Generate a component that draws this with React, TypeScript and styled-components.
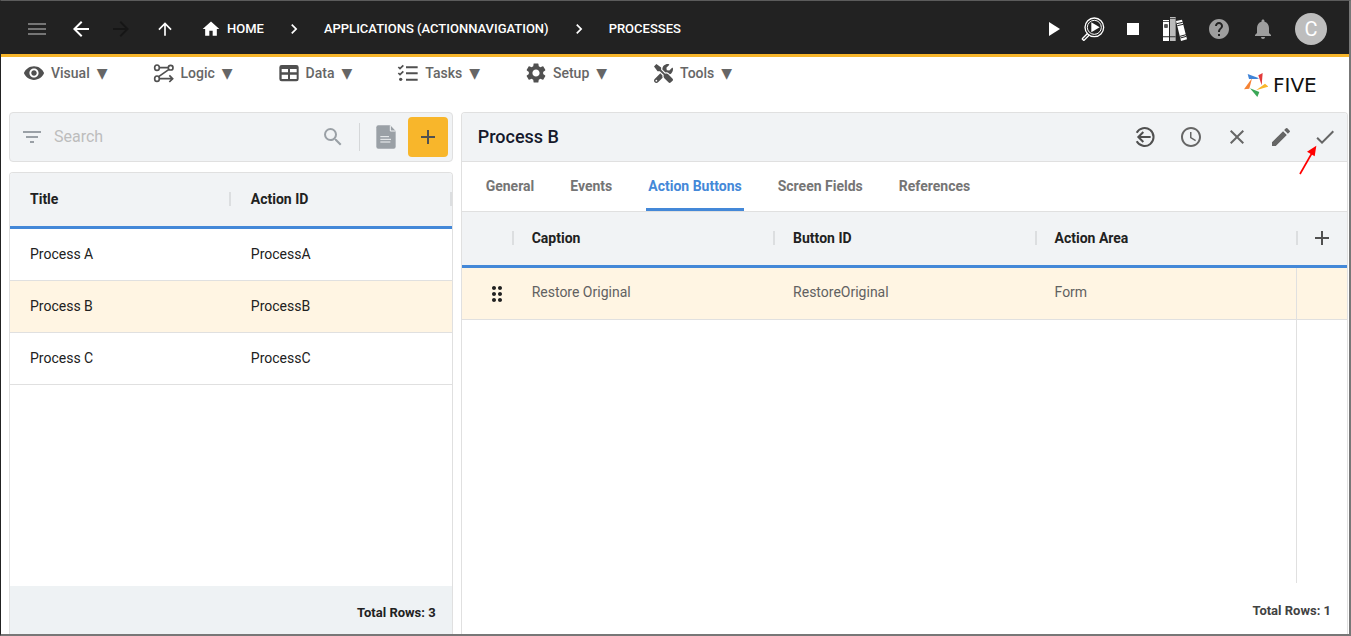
import React from "react";
import styled, { createGlobalStyle, css } from "styled-components";
import {
  MdAdd,
  MdArrowBack,
  MdArrowForward,
  MdArrowUpward,
  MdCheck,
  MdChevronRight,
  MdClose,
  MdDragIndicator,
  MdEdit,
  MdFilterList,
  MdHelp,
  MdHome,
  MdMenu,
  MdNotifications,
  MdPlayArrow,
  MdSchedule,
  MdSearch,
  MdSettings,
  MdStop,
  MdVisibility,
} from "react-icons/md";
import { FaTools } from "react-icons/fa";

const GlobalStyle = createGlobalStyle`
  *, *::before, *::after { box-sizing: border-box; }
  body {
    margin: 0;
    background: #fff;
    color: #212121;
    font-family: Roboto, "Liberation Sans", sans-serif;
    font-size: 14px;
    line-height: 20px;
  }
  button, input { font: inherit; }
  svg { display: block; flex: none; }
`;

const line = "#e0e0e0";
const panelGrey = "#f1f3f5";
const blue = "#4488d8";
const yellow = "#f8b62b";

const Frame = styled.div`
  display: flex;
  flex-direction: column;
  min-height: 100vh;
  border: solid #777;
  border-width: 1px 2px 2px 1px;
  border-top-color: #5c5c5c;
  border-left-color: #222;
`;

const TopBar = styled.header`
  display: flex;
  align-items: center;
  justify-content: space-between;
  height: 56px;
  padding: 2px 22px 0 24px;
  background: #222;
  border-bottom: 3px solid ${yellow};
  color: #fff;
`;

const Row = styled.div<{ $gap: number }>`
  display: flex;
  align-items: center;
  gap: ${(p) => p.$gap}px;
`;

const IconButton = styled.button<{ $color?: string }>`
  display: flex;
  align-items: center;
  justify-content: center;
  width: 24px;
  height: 24px;
  padding: 0;
  border: 0;
  background: none;
  color: ${(p) => p.$color ?? "inherit"};
  cursor: pointer;
`;

const Crumbs = styled.nav`
  display: flex;
  align-items: center;
  gap: 20px;
  margin-left: 4px;
`;

const Crumb = styled.a`
  display: flex;
  align-items: center;
  gap: 6px;
  color: #fff;
  font-size: 13px;
  font-weight: 500;
  text-decoration: none;
  text-transform: uppercase;
`;

const Avatar = styled.button`
  width: 32px;
  height: 32px;
  padding: 0;
  border: 0;
  border-radius: 50%;
  background: #bdbdbd;
  color: #fff;
  font-size: 20px;
`;

const MenuBar = styled.div`
  display: flex;
  justify-content: space-between;
  height: 55px;
  padding: 4px 17px 0 21px;
`;

const Menu = styled.nav`
  display: flex;
  align-items: flex-start;
  gap: 44px;
`;

const MenuButton = styled.button`
  display: flex;
  align-items: center;
  gap: 5px;
  padding: 0;
  border: 0;
  background: none;
  color: #666;
  font-weight: 500;
`;

const MenuIcon = styled.span`
  display: flex;
  align-items: center;
  justify-content: center;
  width: 24px;
  height: 24px;
  color: #505050;
`;

const Caret = styled.span`
  margin-left: 2px;
  font-family: "DejaVu Sans", sans-serif;
  font-weight: 400;
`;

const Logo = styled.a`
  display: flex;
  align-items: center;
  gap: 5px;
  width: 88px;
  height: 24px;
  margin-top: 12px;
  color: #111;
  font: 20px/24px "DejaVu Sans", sans-serif;
  text-decoration: none;
`;

const Main = styled.main`
  flex: 1;
  display: grid;
  grid-template-columns: minmax(0, 1fr) minmax(0, 2fr);
  gap: 8px;
  padding: 0 1px 0 8px;
`;

const ListColumn = styled.section`
  display: flex;
  flex-direction: column;
  gap: 10px;
`;

const SearchBar = styled.form`
  display: flex;
  align-items: center;
  height: 50px;
  padding: 0 4px 0 10px;
  border: 1px solid ${line};
  border-radius: 4px;
  background: ${panelGrey};
  color: #9aa0a6;
`;

const SearchInput = styled.input`
  flex: 1;
  min-width: 0;
  margin: 0 10px;
  padding: 0;
  border: 0;
  outline: 0;
  background: none;
  color: #212121;
  font-size: 16px;
  &::placeholder { color: #bdbdbd; opacity: 1; }
`;

const Separator = styled.span`
  width: 1px;
  height: 28px;
  margin: 0 16px 0 14px;
  background: #d5d7d9;
`;

const AddButton = styled.button`
  display: flex;
  align-items: center;
  justify-content: center;
  width: 40px;
  height: 40px;
  margin-left: 12px;
  padding: 0;
  border: 0;
  border-radius: 4px;
  background: ${yellow};
  color: #505050;
`;

const Panel = styled.section`
  flex: 1;
  display: flex;
  flex-direction: column;
  border: 1px solid ${line};
  border-bottom: 0;
  border-radius: 4px 4px 0 0;
  overflow: hidden;
`;

const Table = styled.table`
  width: 100%;
  table-layout: fixed;
  border-collapse: separate;
  border-spacing: 0;
  text-align: left;
`;

const HeadCell = styled.th`
  height: 56px;
  padding: 0 0 2px;
  background: ${panelGrey};
  border-bottom: 3px solid ${blue};
  font-weight: 700;
`;

const HeadInner = styled.div<{ $lead?: boolean }>`
  display: flex;
  align-items: center;
  ${(p) =>
    p.$lead
      ? css`gap: 18px;`
      : css`justify-content: space-between; padding-left: 20px;`}
`;

const Tick = styled.span`
  width: 2px;
  height: 14px;
  background: #dcdee0;
`;

const Cell = styled.td<{ $muted?: boolean; $divided?: boolean }>`
  height: 52px;
  padding: ${(p) => (p.$muted ? "0 0 4px 20px" : "0 0 2px 20px")};
  border-bottom: 1px solid ${line};
  border-left: ${(p) => (p.$divided ? `1px solid ${line}` : "0")};
  color: ${(p) => (p.$muted ? "#616161" : "#212121")};
`;

const DragCell = styled(Cell)`
  padding: 0 0 0 23px;
`;

const BodyRow = styled.tr<{ $selected?: boolean }>`
  background: ${(p) => (p.$selected ? "#fff5e3" : "#fff")};
`;

const Space = styled.div`
  flex: 1;
  display: grid;
  grid-template-columns: 1fr 51px;
`;

const SpaceEdge = styled.span`
  border-left: 1px solid ${line};
`;

const Footer = styled.footer<{ $tinted?: boolean }>`
  display: flex;
  align-items: center;
  justify-content: flex-end;
  height: ${(p) => (p.$tinted ? 48 : 51)}px;
  padding: ${(p) => (p.$tinted ? 6 : 4)}px 16px 0;
  background: ${(p) => (p.$tinted ? "#eef2f4" : "#fff")};
  color: ${(p) => (p.$tinted ? "#212121" : "#424242")};
  font-size: 13px;
  font-weight: 700;
`;

const PanelHeader = styled.div`
  display: flex;
  align-items: center;
  justify-content: space-between;
  height: 49px;
  padding: 0 10px 0 16px;
  background: ${panelGrey};
  border-bottom: 1px solid ${line};
  color: #666;
`;

const PanelTitle = styled.h1`
  margin: 0;
  color: #15192c;
  font-size: 18px;
  font-weight: 500;
`;

const Tabs = styled.div`
  display: flex;
  gap: 32px;
  height: 50px;
  padding: 0 22px;
  border-bottom: 1px solid ${line};
`;

const Tab = styled.button<{ $active?: boolean }>`
  padding: 1px 2px 0;
  border: 0;
  border-bottom: 3px solid ${(p) => (p.$active ? blue : "transparent")};
  border-radius: 2px 2px 0 0;
  background: none;
  color: ${(p) => (p.$active ? blue : "#757575")};
  font-weight: 700;
`;

const Anchor = styled.div`
  position: relative;
`;

const Pointer = styled.svg`
  position: absolute;
  top: 20px;
  right: 20px;
  z-index: 1;
`;

const LogicIcon = () => (
  <svg width="24" height="24" viewBox="0 0 72 72" fill="none" stroke="currentColor" strokeWidth="5">
    <ellipse cx="15" cy="20" rx="7" ry="8" />
    <ellipse cx="56" cy="20" rx="7" ry="7" />
    <path d="M22 20h27M51 25 20 47M22 53h38M52 43l10 10-10 10" />
    <ellipse cx="15" cy="53" rx="7" ry="8" />
  </svg>
);

const DataIcon = () => (
  <svg width="24" height="24" viewBox="0 0 72 72" fill="currentColor" fillRule="evenodd">
    <path d="M14 12h44q7 0 7 7v35q0 7-7 7H14q-7 0-7-7V19q0-7 7-7zM14 24v10h19V24zM39 24v10h20V24zM14 41v13h19V41zM39 41v13h20V41z" />
  </svg>
);

const TasksIcon = () => (
  <svg width="24" height="24" viewBox="0 0 72 72" stroke="currentColor" fill="none" strokeWidth="6">
    <path d="M30 19h35M30 37h35M30 56h35" />
    <path d="M7 18l5 5 10-10M7 36l5 5 10-10" strokeWidth="5" />
    <circle cx="14" cy="55" r="5" fill="currentColor" stroke="none" />
  </svg>
);

const InspectIcon = () => (
  <svg width="24" height="24" viewBox="0 0 72 72" fill="none" stroke="#fff">
    <circle cx="40" cy="31" r="28" strokeWidth="4" />
    <circle cx="40" cy="31" r="21" strokeWidth="3" />
    <path d="M20 49 3 66M25 54 8 71M3 65l6 6" strokeWidth="4" />
    <path d="M31 16v30l25-15z" fill="#fff" stroke="none" />
  </svg>
);

const BooksIcon = () => (
  <svg width="24" height="24" viewBox="0 0 72 72">
    <path d="M0 9h18v63H0z" fill="#fff" />
    <path d="M4 22h10v10H4zM0 12h18v2H0zM0 58h18v3H0z" fill="#222" />
    <path d="M5 24h8v7H5z" fill="#555" />
    <path d="M21 0h17v72H21z" fill="#bbb" />
    <path d="M21 3h17v2H21zM21 58h17v3H21z" fill="#333" />
    <path d="M39 12l18-4 15 59-18 5z" fill="#fff" />
    <path d="M41 20l18-4M43 26l18-4M51 58l18-5M52 63l18-5" stroke="#222" strokeWidth="3" />
  </svg>
);

const DocumentIcon = () => (
  <svg width="20" height="24" viewBox="0 0 60 72">
    <path d="M7 1h36l16 17v47q0 6-6 6H7q-6 0-6-6V7q0-6 6-6z" fill="#9aa0a6" />
    <path d="M43 1v17h16" fill="none" stroke="#f1f3f5" strokeWidth="3" />
    <path d="M13 35h26M13 43h32M13 51h30" stroke="#f1f3f5" strokeWidth="3" />
  </svg>
);

const RevertIcon = () => (
  <svg width="24" height="24" viewBox="0 0 72 72" fill="none" stroke="#505050" strokeWidth="6">
    <path d="M11 23A27 27 0 1 1 11 49" />
    <path d="M53 36H17M31 21 16 36l15 15" />
  </svg>
);

const StarMark = () => (
  <svg width="24" height="24" viewBox="0 0 72 72">
    <path d="M11 3l34 13-6 2H15z" fill="#3f84d8" />
    <path d="M43 7l13-7-3 37z" fill="#e23b3b" />
    <path d="M73 41l-10-9-27 20z" fill="#f8b62b" />
    <path d="M18 46l28 11-6 15z" fill="#3aa757" />
    <path d="M24 16L0 49l16-2z" fill="#f58233" />
  </svg>
);

const menuItems = [
  { label: "Visual", icon: <MdVisibility size={22} /> },
  { label: "Logic", icon: <LogicIcon /> },
  { label: "Data", icon: <DataIcon /> },
  { label: "Tasks", icon: <TasksIcon /> },
  { label: "Setup", icon: <MdSettings size={24} /> },
  { label: "Tools", icon: <FaTools size={19} /> },
];

const processes = [
  { title: "Process A", id: "ProcessA" },
  { title: "Process B", id: "ProcessB" },
  { title: "Process C", id: "ProcessC" },
];

const tabs = ["General", "Events", "Action Buttons", "Screen Fields", "References"];

export default function App() {
  return (
    <>
      <GlobalStyle />
      <Frame>
        <TopBar>
          <Row $gap={20}>
            <IconButton aria-label="Menu" $color="#757575"><MdMenu size={24} /></IconButton>
            <Row $gap={16}>
              <IconButton aria-label="Back"><MdArrowBack size={24} /></IconButton>
              <IconButton aria-label="Forward" $color="#161616"><MdArrowForward size={24} /></IconButton>
            </Row>
            <IconButton aria-label="Up"><MdArrowUpward size={20} /></IconButton>
            <Crumbs aria-label="Breadcrumb">
              <Crumb href="#home"><MdHome size={20} />Home</Crumb>
              <MdChevronRight size={20} />
              <Crumb href="#applications">Applications (ActionNavigation)</Crumb>
              <MdChevronRight size={20} />
              <Crumb href="#processes">Processes</Crumb>
            </Crumbs>
          </Row>
          <Row $gap={18}>
            <Row $gap={16}>
              <IconButton aria-label="Run"><MdPlayArrow size={24} /></IconButton>
              <IconButton aria-label="Inspect"><InspectIcon /></IconButton>
              <IconButton aria-label="Stop"><MdStop size={24} /></IconButton>
            </Row>
            <Row $gap={20}>
              <IconButton aria-label="Library"><BooksIcon /></IconButton>
              <IconButton aria-label="Help" $color="#9e9e9e"><MdHelp size={24} /></IconButton>
              <IconButton aria-label="Notifications" $color="#9e9e9e"><MdNotifications size={24} /></IconButton>
              <Avatar>C</Avatar>
            </Row>
          </Row>
        </TopBar>

        <MenuBar>
          <Menu>
            {menuItems.map((item) => (
              <MenuButton key={item.label}>
                <MenuIcon>{item.icon}</MenuIcon>
                {item.label}
                <Caret>▼</Caret>
              </MenuButton>
            ))}
          </Menu>
          <Logo href="#five"><StarMark />FIVE</Logo>
        </MenuBar>

        <Main>
          <ListColumn>
            <SearchBar>
              <MdFilterList size={24} />
              <SearchInput type="text" placeholder="Search" aria-label="Search" />
              <IconButton type="button" aria-label="Run search"><MdSearch size={24} /></IconButton>
              <Separator />
              <DocumentIcon />
              <AddButton type="button" aria-label="Add process"><MdAdd size={24} /></AddButton>
            </SearchBar>
            <Panel>
              <Table>
                <thead>
                  <tr>
                    <HeadCell><HeadInner>Title<Tick /></HeadInner></HeadCell>
                    <HeadCell><HeadInner>Action ID<Tick /></HeadInner></HeadCell>
                  </tr>
                </thead>
                <tbody>
                  {processes.map((p) => (
                    <BodyRow key={p.id} $selected={p.id === "ProcessB"}>
                      <Cell>{p.title}</Cell>
                      <Cell>{p.id}</Cell>
                    </BodyRow>
                  ))}
                </tbody>
              </Table>
              <Space />
              <Footer $tinted>Total Rows: 3</Footer>
            </Panel>
          </ListColumn>

          <Panel>
            <PanelHeader>
              <PanelTitle>Process B</PanelTitle>
              <Row $gap={20}>
                <Row $gap={22}>
                  <IconButton aria-label="Revert"><RevertIcon /></IconButton>
                  <IconButton aria-label="History"><MdSchedule size={24} /></IconButton>
                  <IconButton aria-label="Cancel"><MdClose size={24} /></IconButton>
                </Row>
                <IconButton aria-label="Edit"><MdEdit size={24} /></IconButton>
                <Anchor>
                  <IconButton aria-label="Save"><MdCheck size={24} /></IconButton>
                  <Pointer width="19" height="30" viewBox="0 0 57 90">
                    <path d="M6 87 42 24" stroke="#f00" strokeWidth="5" />
                    <path d="M55 2 27 20 50 34z" fill="#f00" />
                  </Pointer>
                </Anchor>
              </Row>
            </PanelHeader>
            <Tabs role="tablist">
              {tabs.map((t) => (
                <Tab key={t} role="tab" aria-selected={t === "Action Buttons"} $active={t === "Action Buttons"}>
                  {t}
                </Tab>
              ))}
            </Tabs>
            <Table>
              <colgroup>
                <col style={{ width: 50 }} />
                <col />
                <col />
                <col />
                <col style={{ width: 51 }} />
              </colgroup>
              <thead>
                <tr>
                  <HeadCell />
                  <HeadCell><HeadInner $lead><Tick />Caption</HeadInner></HeadCell>
                  <HeadCell><HeadInner $lead><Tick />Button ID</HeadInner></HeadCell>
                  <HeadCell><HeadInner $lead><Tick />Action Area</HeadInner></HeadCell>
                  <HeadCell>
                    <Row $gap={12}>
                      <Tick />
                      <IconButton aria-label="Add action button" $color="#505050"><MdAdd size={24} /></IconButton>
                    </Row>
                  </HeadCell>
                </tr>
              </thead>
              <tbody>
                <BodyRow $selected>
                  <DragCell><MdDragIndicator size={24} /></DragCell>
                  <Cell $muted>Restore Original</Cell>
                  <Cell $muted>RestoreOriginal</Cell>
                  <Cell $muted>Form</Cell>
                  <Cell $divided />
                </BodyRow>
              </tbody>
            </Table>
            <Space><span /><SpaceEdge /></Space>
            <Footer>Total Rows: 1</Footer>
          </Panel>
        </Main>
      </Frame>
    </>
  );
}
